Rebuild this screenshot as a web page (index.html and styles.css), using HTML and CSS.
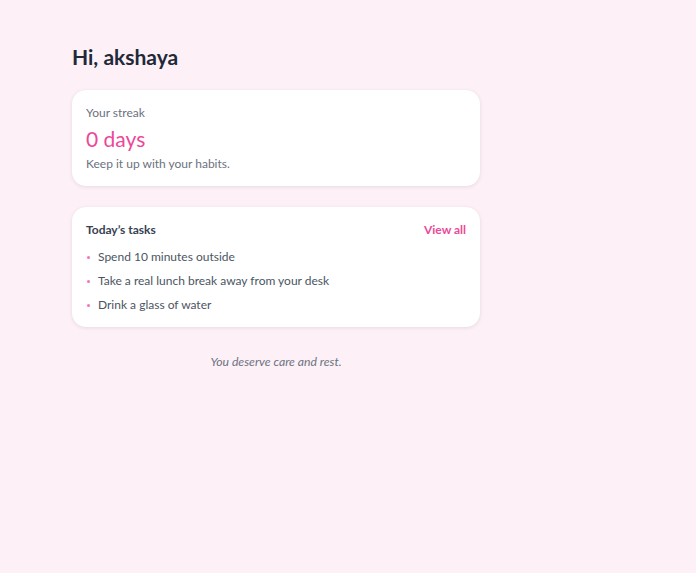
FILE: index.html
```html
<!DOCTYPE html>
<html lang="en">
<head>
<meta charset="utf-8">
<title>Home</title>
<link rel="stylesheet" href="styles.css">
</head>
<body>
<main class="page">
  <h1 class="greeting">Hi, akshaya</h1>
  <section class="card streak">
    <div class="label">Your streak</div>
    <div class="streak-value">0 days</div>
    <div class="muted">Keep it up with your habits.</div>
  </section>
  <section class="card tasks">
    <div class="tasks-head">
      <span class="tasks-title">Today’s tasks</span>
      <a class="view-all" href="#">View all</a>
    </div>
    <ul class="task-list">
      <li>Spend 10 minutes outside</li>
      <li>Take a real lunch break away from your desk</li>
      <li>Drink a glass of water</li>
    </ul>
  </section>
  <p class="footer-note">You deserve care and rest.</p>
</main>
</body>
</html>
```

FILE: styles.css
```css
html, body {
  margin: 0;
  background: #fdf0f7;
}
body {
  font-family: Lato, "Noto Sans", sans-serif;
  color: #374151;
}
.page {
  width: 408px;
  padding: 45px 72px;
  display: flex;
  flex-direction: column;
  gap: 21px;
}
.greeting {
  margin: 0;
  font-size: 21px;
  font-weight: 700;
  color: #1f2937;
  line-height: 24px;
}
.card {
  background: #fff;
  border-radius: 14px;
  box-shadow: 0 1px 4px rgba(0,0,0,0.09), 0 0 1px rgba(0,0,0,0.06);
  padding: 14px 14px;
}
.label {
  font-size: 12px;
  color: #6b7280;
  line-height: 18px;
}
.streak-value {
  font-size: 21px;
  color: #ec4899;
  font-weight: 400;
  line-height: 26px;
  margin-top: 4px;
}
.muted {
  font-size: 12px;
  color: #6b7280;
  line-height: 19px;
  margin-top: 2px;
}
.streak {
  padding-bottom: 13px;
}
.tasks-head {
  display: flex;
  justify-content: space-between;
  align-items: center;
  line-height: 18px;
}
.tasks-title {
  font-size: 12px;
  font-weight: 700;
  color: #374151;
}
.view-all {
  font-size: 12px;
  font-weight: 700;
  color: #ec4899;
  text-decoration: none;
}
.task-list {
  list-style: none;
  margin: 9px 0 0;
  padding: 0;
  display: flex;
  flex-direction: column;
  gap: 6px;
}
.task-list li {
  font-size: 12px;
  line-height: 18px;
  color: #4b5563;
  display: flex;
  align-items: center;
  gap: 8px;
}
.task-list li::before {
  content: "";
  width: 3px;
  height: 3px;
  border-radius: 50%;
  background: #f472b6;
  margin-left: 1px;
}
.tasks {
  padding-bottom: 13px;
}
.footer-note {
  margin: 6px 0 0;
  text-align: center;
  font-style: italic;
  font-size: 12.2px;
  color: #6b7280;
}
```
